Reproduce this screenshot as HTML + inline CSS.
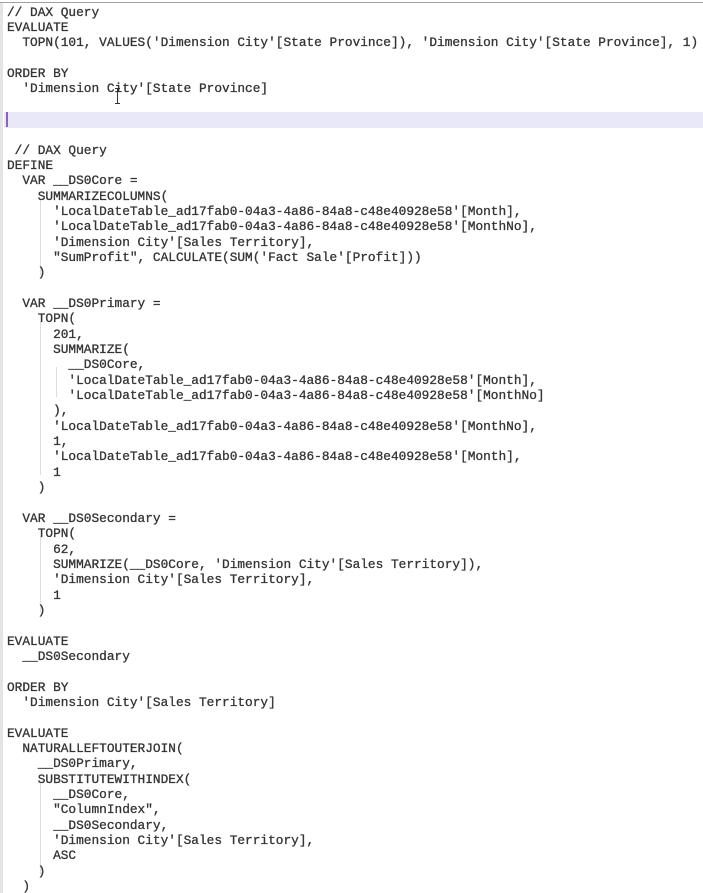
<!DOCTYPE html>
<html><head><meta charset="utf-8"><style>
html,body{margin:0;padding:0;background:#fff;width:703px;height:893px;overflow:hidden;position:relative}
#top{position:absolute;left:0;top:2px;width:703px;height:1px;background:#a0a0a0}
#left{position:absolute;left:0;top:3px;width:3px;height:890px;background:#e4e4e4}
#hl{position:absolute;left:4px;top:112px;width:699px;height:16px;background:#e8e8f8}
#caret{position:absolute;left:6px;top:112px;width:2px;height:15px;background:#9060c0}
pre{position:absolute;left:7px;top:4.5px;margin:0;font-family:"Liberation Mono","Courier New",monospace;font-size:12.8px;line-height:15.35px;color:#333;-webkit-text-stroke:0.3px #333}
.g{position:absolute;width:1px;background:#ddd}
#ib{position:absolute;left:117px;top:88px;width:1px;height:16px;background:#333}
#ib:before,#ib:after{content:"";position:absolute;left:-2px;width:5px;height:1px;background:#333}
#ib:before{top:0}#ib:after{bottom:0}
</style></head><body>
<div id="top"></div><div id="left"></div><div id="hl"></div><div id="caret"></div>
<div class="g" style="left:40px;top:321px;height:154px"></div>
<div class="g" style="left:56px;top:367px;height:30px"></div>
<div class="g" style="left:40px;top:536px;height:76px"></div>
<div class="g" style="left:40px;top:782px;height:92px"></div>
<div class="g" style="left:40px;top:199px;height:76px"></div>
<pre>// DAX Query
EVALUATE
  TOPN(101, VALUES('Dimension City'[State Province]), 'Dimension City'[State Province], 1)

ORDER BY
  'Dimension City'[State Province]



 // DAX Query
DEFINE
  VAR __DS0Core =
    SUMMARIZECOLUMNS(
      'LocalDateTable_ad17fab0-04a3-4a86-84a8-c48e40928e58'[Month],
      'LocalDateTable_ad17fab0-04a3-4a86-84a8-c48e40928e58'[MonthNo],
      'Dimension City'[Sales Territory],
      "SumProfit", CALCULATE(SUM('Fact Sale'[Profit]))
    )

  VAR __DS0Primary =
    TOPN(
      201,
      SUMMARIZE(
        __DS0Core,
        'LocalDateTable_ad17fab0-04a3-4a86-84a8-c48e40928e58'[Month],
        'LocalDateTable_ad17fab0-04a3-4a86-84a8-c48e40928e58'[MonthNo]
      ),
      'LocalDateTable_ad17fab0-04a3-4a86-84a8-c48e40928e58'[MonthNo],
      1,
      'LocalDateTable_ad17fab0-04a3-4a86-84a8-c48e40928e58'[Month],
      1
    )

  VAR __DS0Secondary =
    TOPN(
      62,
      SUMMARIZE(__DS0Core, 'Dimension City'[Sales Territory]),
      'Dimension City'[Sales Territory],
      1
    )

EVALUATE
  __DS0Secondary

ORDER BY
  'Dimension City'[Sales Territory]

EVALUATE
  NATURALLEFTOUTERJOIN(
    __DS0Primary,
    SUBSTITUTEWITHINDEX(
      __DS0Core,
      "ColumnIndex",
      __DS0Secondary,
      'Dimension City'[Sales Territory],
      ASC
    )
  )</pre>
<div id="ib"></div>
</body></html>
